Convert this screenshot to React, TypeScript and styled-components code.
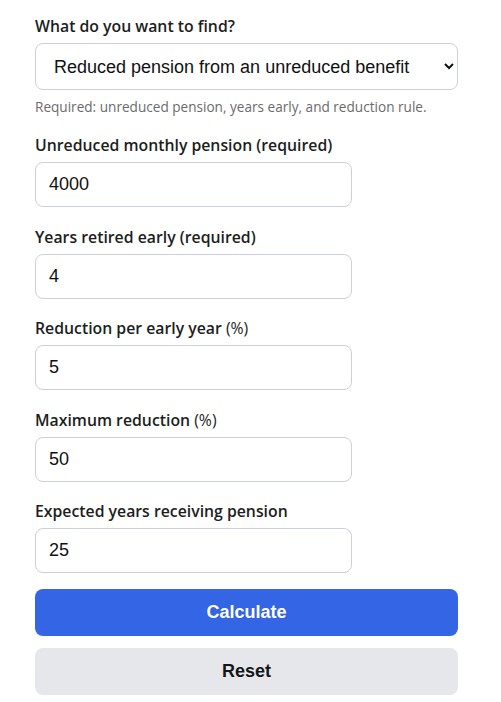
import React from 'react'
import styled, { createGlobalStyle } from 'styled-components'

const GlobalStyle = createGlobalStyle`
  html, body {
    margin: 0;
    background: #fff;
  }
  body {
    font-family: 'Open Sans', 'Liberation Sans', Arial, sans-serif;
    color: #1f2328;
  }
`

const Form = styled.form`
  width: 423px;
  padding: 14px 0 0 35px;
  display: flex;
  flex-direction: column;
`

const Field = styled.div`
  display: flex;
  flex-direction: column;
  margin-bottom: 17.5px;

  &:last-of-type {
    margin-bottom: 16px;
  }
`

const Label = styled.label`
  font-size: 15.8px;
  font-weight: 600;
  line-height: 24px;
  margin-bottom: 5px;
  color: #1c1e21;
`

const Unit = styled.span`
  font-weight: 400;
`

const Select = styled.select`
  height: 47px;
  width: 100%;
  padding: 0 10px 0 14px;
  font-family: 'Liberation Sans', Arial, sans-serif;
  font-size: 18px;
  color: #111;
  background: #fff;
  border: 1px solid #ccd0d8;
  border-radius: 8px;
`

const Hint = styled.p`
  margin: 7.5px 0 0;
  font-size: 13.6px;
  line-height: 18px;
  color: #6b6b6b;
`

const Input = styled.input`
  box-sizing: border-box;
  height: 45px;
  width: 317px;
  padding: 0 13px;
  font-family: 'Liberation Sans', Arial, sans-serif;
  font-size: 18px;
  color: #111;
  border: 1px solid #ccd0d8;
  border-radius: 8px;
  outline: none;
`

const Button = styled.button<{ $primary?: boolean }>`
  height: 47px;
  width: 100%;
  border: none;
  border-radius: 8px;
  font-family: 'Liberation Sans', Arial, sans-serif;
  font-size: 18px;
  font-weight: 700;
  background: ${p => (p.$primary ? '#3465e4' : '#e5e7eb')};
  color: ${p => (p.$primary ? '#fff' : '#14161a')};
  margin-bottom: 12px;
`

const fields = [
  { label: 'Unreduced monthly pension', unit: '(required)', value: '4000' },
  { label: 'Years retired early', unit: '(required)', value: '4' },
  { label: 'Reduction per early year', unit: '(%)', value: '5' },
  { label: 'Maximum reduction', unit: '(%)', value: '50' },
  { label: 'Expected years receiving pension', unit: '', value: '25' },
]

const App: React.FC = () => (
  <>
    <GlobalStyle />
    <Form onSubmit={e => e.preventDefault()}>
      <Field>
        <Label>What do you want to find?</Label>
        <Select defaultValue="reduced">
          <option value="reduced">Reduced pension from an unreduced benefit</option>
          <option value="unreduced">Unreduced pension from a reduced benefit</option>
        </Select>
        <Hint>Required: unreduced pension, years early, and reduction rule.</Hint>
      </Field>
      {fields.map(f => (
        <Field key={f.label}>
          <Label>
            {f.label} {f.unit === '(%)' ? <Unit>{f.unit}</Unit> : f.unit}
          </Label>
          <Input type="text" defaultValue={f.value} />
        </Field>
      ))}
      <Button $primary type="submit">Calculate</Button>
      <Button type="button">Reset</Button>
    </Form>
  </>
)

export default App
